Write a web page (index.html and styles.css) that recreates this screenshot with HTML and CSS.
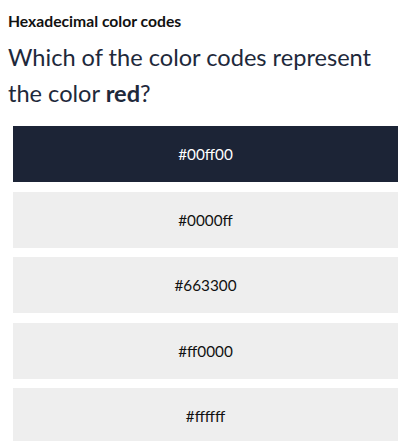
FILE: index.html
```html
<!DOCTYPE html>
<html>
<head>
<meta charset="utf-8">
<link rel="stylesheet" href="styles.css">
</head>
<body>
<div class="quiz">
  <h1 class="topic">Hexadecimal color codes</h1>
  <p class="question">Which of the color codes represent the color <strong>red</strong>?</p>
  <div class="options">
    <button class="option selected">#00ff00</button>
    <button class="option">#0000ff</button>
    <button class="option">#663300</button>
    <button class="option">#ff0000</button>
    <button class="option">#ffffff</button>
  </div>
</div>
</body>
</html>
```
FILE: styles.css
```css
html, body {
  margin: 0;
  padding: 0;
  background: #ffffff;
}
body {
  font-family: Lato, "Noto Sans", sans-serif;
  overflow: hidden;
}
.quiz {
  padding: 10px 8px 0 8px;
}
.topic {
  margin: 0;
  font-size: 15.7px;
  font-weight: 700;
  line-height: 22px;
  letter-spacing: 0;
  color: #111111;
}
.question {
  margin: 7px 0 0 0;
  font-size: 23.6px;
  line-height: 36px;
  color: #1e293b;
}
.question strong {
  font-weight: 700;
}
.options {
  display: flex;
  flex-direction: column;
  gap: 9.5px;
  margin: 15px 5px 0 5px;
}
.option {
  height: 56px;
  border: none;
  margin: 0;
  padding: 0;
  background: #eeeeee;
  color: #111111;
  font-family: Lato, "Noto Sans", sans-serif;
  font-size: 15.3px;
  text-align: center;
}
.option.selected {
  background: #1c2436;
  color: #ffffff;
}
```
